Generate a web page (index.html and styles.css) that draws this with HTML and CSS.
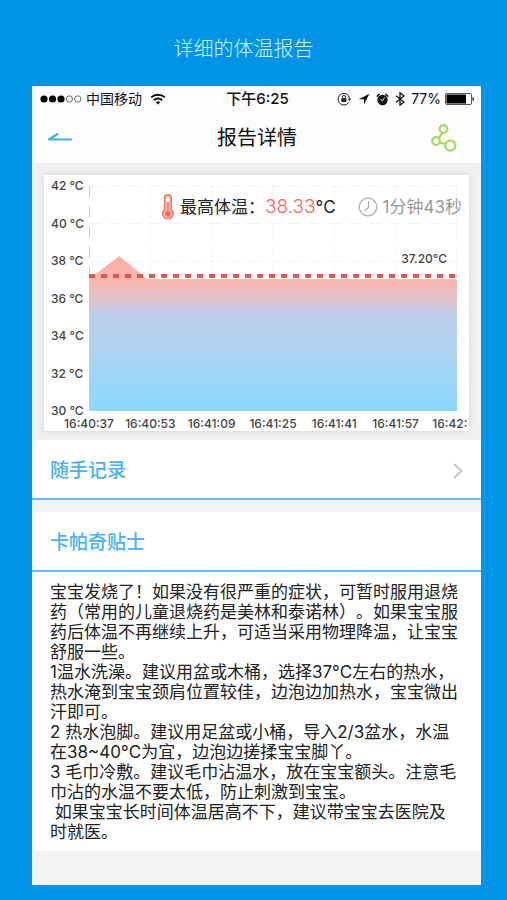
FILE: index.html
```html
<!DOCTYPE html>
<html lang="zh-CN">
<head>
    <meta charset="UTF-8">
    <meta name="viewport" content="width=device-width, initial-scale=1.0">
    <title>报告详情</title>
    <link rel="stylesheet" href="styles.css">
</head>
<body>
    <h2 class="caption">详细的体温报告</h2>
    <div class="phone">
        <div class="status-bar">
            <div class="status-left">
                <svg class="signal" width="42" height="10" viewBox="0 0 42 10">
                    <circle cx="4" cy="5" r="3.6"/>
                    <circle cx="12.5" cy="5" r="3.6"/>
                    <circle cx="21" cy="5" r="3.6"/>
                    <circle cx="29.3" cy="5" r="3.2" fill="none" stroke="#333" stroke-width="0.7"/>
                    <circle cx="37.8" cy="5" r="3.2" fill="none" stroke="#333" stroke-width="0.7"/>
                </svg>
                <span>中国移动</span>
                <svg class="wifi" width="16" height="12" viewBox="0 0 16 12" fill="none" stroke="#111" stroke-width="2">
                    <path d="M1.2 4.4a9.8 9.8 0 0 1 13.6 0"/>
                    <path d="M3.9 7.2a5.9 5.9 0 0 1 8.2 0"/>
                    <path d="M8 11.5L5.8 9.2a3.2 3.2 0 0 1 4.4 0z" fill="#111" stroke="none"/>
                </svg>
            </div>
            <div class="status-time">下午6:25</div>
            <div class="status-right">
                <svg width="15" height="14" viewBox="0 0 15 14" fill="none" stroke="#222" stroke-width="1">
                    <path d="M11.6 10.6A5.8 5.8 0 1 1 12.6 6.4"/>
                    <path d="M10.6 6.4h3.8l-1.9 2.6z" fill="#222" stroke="none"/>
                    <rect x="4.4" y="6.2" width="5" height="3.8" fill="#222" stroke="none"/>
                    <path d="M5.4 6.4V5a1.5 1.5 0 0 1 3 0v1.4"/>
                </svg>
                <svg width="12" height="12" viewBox="0 0 12 12">
                    <path d="M11.4 0.8L0.8 6.2H6v5.2z" fill="#111"/>
                </svg>
                <svg width="13" height="13" viewBox="0 0 13 13">
                    <circle cx="6.5" cy="7" r="5.2" fill="#111"/>
                    <path d="M0.9 3.6L3.5 1M12.1 3.6L9.5 1" stroke="#111" stroke-width="1.5"/>
                    <path d="M6.5 7.6l2.2-3M6.5 7.6L4.6 6.4" stroke="#fff" stroke-width="1"/>
                </svg>
                <svg width="10" height="14" viewBox="0 0 10 14" fill="none" stroke="#111" stroke-width="1.3">
                    <path d="M1 3.8l8 6.2-4 3.2V0.8L9 4 1 10.2"/>
                </svg>
                <span>77%</span>
                <svg class="battery" width="30" height="12" viewBox="0 0 30 12">
                    <rect x="0.5" y="0.5" width="26" height="11" rx="1.5" fill="#fff" stroke="#555"/>
                    <rect x="1.5" y="1.5" width="19.5" height="9" fill="#000"/>
                    <path d="M27.5 4c2 0.4 2 3.6 0 4z" fill="#222"/>
                </svg>
            </div>
        </div>

        <header class="nav-bar">
            <button class="nav-btn" type="button" aria-label="返回">
                <svg width="26" height="12" viewBox="0 0 26 12" fill="none" stroke="#3fb0f7" stroke-width="2.2" stroke-linecap="round" stroke-linejoin="round">
                    <path d="M24 7.5H1.8L10.5 2"/>
                </svg>
            </button>
            <h1>报告详情</h1>
            <button class="nav-btn share" type="button" aria-label="分享">
                <svg width="26" height="28" viewBox="0 0 26 28" fill="none" stroke="#a3dc5c" stroke-width="2.2">
                    <circle cx="12.5" cy="5" r="3.8"/>
                    <circle cx="5" cy="17" r="3.8"/>
                    <circle cx="19.3" cy="21.6" r="5"/>
                    <path d="M11 8.6C9.6 11 9 12.5 7.8 14.5M8.6 18.4c2 0.9 3.4 0.4 5.8 1.6"/>
                </svg>
            </button>
        </header>

        <section class="report">
            <div class="card">
                <div class="summary">
                    <svg class="thermometer" width="14" height="26" viewBox="0 0 14 26" fill="none" stroke="#fb7162">
                        <path d="M3.5 15.5V4a3.4 3.4 0 0 1 6.8 0v11.5a5.3 5.3 0 1 1-6.8 0z" fill="#ffb9b0" stroke-width="1.4"/>
                        <path d="M5.4 4.2a1.5 1.5 0 0 1 3 0V8h-3z" fill="#fff" stroke="none"/>
                        <path d="M6.9 8v10M8.2 9h-2M8.2 11.5h-2M8.2 14h-2" stroke-width="1"/>
                        <circle cx="6.9" cy="19.8" r="2.4" fill="#fb6052"/>
                    </svg>
                    <span class="label">最高体温：</span>
                    <span class="value">38.33</span>
                    <span class="unit">°C</span>
                    <svg class="clock" width="20" height="20" viewBox="0 0 20 20" fill="none" stroke="#b0b0b0" stroke-width="1.3">
                        <circle cx="10" cy="10" r="8.8"/>
                        <path d="M10.5 4v6.5L6.5 14"/>
                    </svg>
                    <span class="duration">1分钟43秒</span>
                </div>
                <div class="chart">
                    <div class="y-axis">
                        <span>42 °C</span>
                        <span>40 °C</span>
                        <span>38 °C</span>
                        <span>36 °C</span>
                        <span>34 °C</span>
                        <span>32 °C</span>
                        <span>30 °C</span>
                    </div>
                    <div class="plot">
                        <svg viewBox="0 0 368 225" preserveAspectRatio="none">
                            <defs>
                                <linearGradient id="heat" x1="0" y1="70" x2="0" y2="225" gradientUnits="userSpaceOnUse">
                                    <stop offset="0" stop-color="#ffb0a4"/>
                                    <stop offset="0.16" stop-color="#fcb6ae"/>
                                    <stop offset="0.29" stop-color="#dcc5d0"/>
                                    <stop offset="0.38" stop-color="#bccfec"/>
                                    <stop offset="0.6" stop-color="#b0d3f1"/>
                                    <stop offset="1" stop-color="#8cd7fe"/>
                                </linearGradient>
                            </defs>
                            <g class="grid">
                                <path d="M0 0.5H368M0 37.5H368M0 75H368M0 112.5H368M0 150H368M0 187.5H368"/>
                                <path d="M61.3 0V225M122.7 0V225M184 0V225M245.3 0V225M306.7 0V225M367.5 0V225"/>
                            </g>
                            <path d="M0 93L30 70L58 93H368V225H0z" fill="url(#heat)"/>
                            <path class="axis" d="M0.5 0V225"/>
                            <path class="limit" d="M0 90H368"/>
                        </svg>
                        <span class="limit-label">37.20°C</span>
                    </div>
                    <div class="x-axis">
                        <span>16:40:37</span>
                        <span>16:40:53</span>
                        <span>16:41:09</span>
                        <span>16:41:25</span>
                        <span>16:41:41</span>
                        <span>16:41:57</span>
                        <span class="last">16:42:</span>
                    </div>
                </div>
            </div>
        </section>

        <a class="row" href="#">
            <span>随手记录</span>
            <svg width="10" height="16" viewBox="0 0 10 16" fill="none" stroke="#c4c4c4" stroke-width="1.8">
                <path d="M1 1l7.5 7L1 15"/>
            </svg>
        </a>

        <section class="tips">
            <h2 class="row">卡帕奇贴士</h2>
            <div class="tips-text">
                <p>宝宝发烧了！如果没有很严重的症状，可暂时服用退烧药（常用的儿童退烧药是美林和泰诺林）。如果宝宝服药后体温不再继续上升，可适当采用物理降温，让宝宝舒服一些。</p>
                <p>1温水洗澡。建议用盆或木桶，选择37°C左右的热水，热水淹到宝宝颈肩位置较佳，边泡边加热水，宝宝微出汗即可。</p>
                <p>2 热水泡脚。建议用足盆或小桶，导入2/3盆水，水温在38~40°C为宜，边泡边搓揉宝宝脚丫。</p>
                <p>3 毛巾冷敷。建议毛巾沾温水，放在宝宝额头。注意毛巾沾的水温不要太低，防止刺激到宝宝。</p>
                <p>&nbsp;如果宝宝长时间体温居高不下，建议带宝宝去医院及时就医。</p>
            </div>
        </section>
    </div>
</body>
</html>
```
FILE: styles.css
```css
* {
    box-sizing: border-box;
}
body {
    margin: 0;
    padding: 37px 26px 15px 32px;
    background-color: #0094e7;
    font-family: Inter, "Noto Sans CJK SC", sans-serif;
    color: #222;
    text-spacing-trim: space-all;
}
h1, h2, p {
    margin: 0;
    font-weight: normal;
}
svg {
    display: block;
    flex: none;
}
.caption {
    height: 49px;
    padding-right: 26px;
    font-size: 20px;
    line-height: 24px;
    font-weight: 300;
    text-align: center;
    color: #d8f2ff;
}
.phone {
    background-color: #f3f3f3;
    padding-bottom: 34px;
}

/* status bar */
.status-bar {
    display: grid;
    grid-template-columns: 1fr auto 1fr;
    align-items: center;
    height: 26px;
    padding: 0 6px 0 8px;
    background-color: #fdfdfd;
    font-size: 14px;
    line-height: 20px;
    color: #111;
}
.status-left,
.status-right {
    display: flex;
    align-items: center;
}
.status-left {
    gap: 4px;
}
.wifi {
    margin-left: 4px;
}
.status-right {
    justify-content: flex-end;
    gap: 6px;
}
.battery {
    margin-left: -2px;
}
.status-time {
    font-size: 15px;
    font-weight: 500;
}

/* navigation */
.nav-bar {
    display: flex;
    align-items: center;
    justify-content: space-between;
    height: 51px;
    padding: 0 23px 0 15px;
    background-color: #fdfdfd;
}
.nav-bar h1 {
    font-size: 20px;
    line-height: 28px;
    color: #111;
}
.nav-btn {
    display: flex;
    width: 36px;
    padding: 0;
    border: none;
    background: none;
    cursor: pointer;
}
.nav-btn.share {
    width: 27px;
}

/* chart card */
.report {
    padding: 12px 12px 9px;
    background-color: #f0f0f0;
}
.card {
    position: relative;
    overflow: hidden;
    padding: 11px 12px 0 7px;
    background-color: #fff;
    box-shadow: 0 0 6px rgba(0, 0, 0, 0.12);
}
.chart {
    display: grid;
    grid-template-columns: 38px 1fr;
    font-size: 12px;
    line-height: 14px;
    font-weight: 500;
    color: #444;
}
.y-axis {
    display: flex;
    flex-direction: column;
    justify-content: space-between;
    margin: -7px 0;
}
.plot {
    position: relative;
    height: 225px;
}
.plot svg {
    width: 100%;
    height: 100%;
}
.plot path {
    vector-effect: non-scaling-stroke;
}
.grid {
    fill: none;
    stroke: #f2f2f2;
    stroke-dasharray: 12 8;
}
.axis {
    stroke: #ccc;
    stroke-dasharray: 12 8;
}
.limit {
    stroke: #e25555;
    stroke-width: 4;
    stroke-dasharray: 6 6;
}
.limit-label {
    position: absolute;
    right: 10px;
    top: 66px;
}
.x-axis {
    grid-column: 2;
    display: grid;
    grid-template-columns: repeat(7, calc(100% / 6));
    margin-left: calc(-100% / 12);
    margin-right: calc(100% / 12);
    padding: 6px 0 0;
    text-align: center;
}
.x-axis .last {
    padding-left: 6px;
    text-align: left;
}
.summary {
    position: absolute;
    z-index: 1;
    top: 18px;
    right: 7px;
    display: flex;
    align-items: center;
    font-size: 17px;
    line-height: 28px;
}
.thermometer {
    margin-right: 5px;
}
.value {
    font-size: 19px;
    font-weight: 300;
    color: #fb6a5b;
}
.clock {
    margin: 0 5px 0 22px;
}
.duration {
    color: #999;
}

/* list rows */
.row {
    display: flex;
    align-items: center;
    justify-content: space-between;
    height: 60px;
    padding: 4px 18px 0;
    border-bottom: 2px solid #62bdf5;
    background-color: #fff;
    font-size: 19px;
    line-height: 28px;
    font-weight: 500;
    color: #45b2f5;
    text-decoration: none;
}
.tips {
    margin-top: 12px;
    background-color: #fff;
}
.tips-text {
    padding: 10px 20px 9px 18px;
    font-size: 17px;
    line-height: 20px;
    color: #222;
}
```
